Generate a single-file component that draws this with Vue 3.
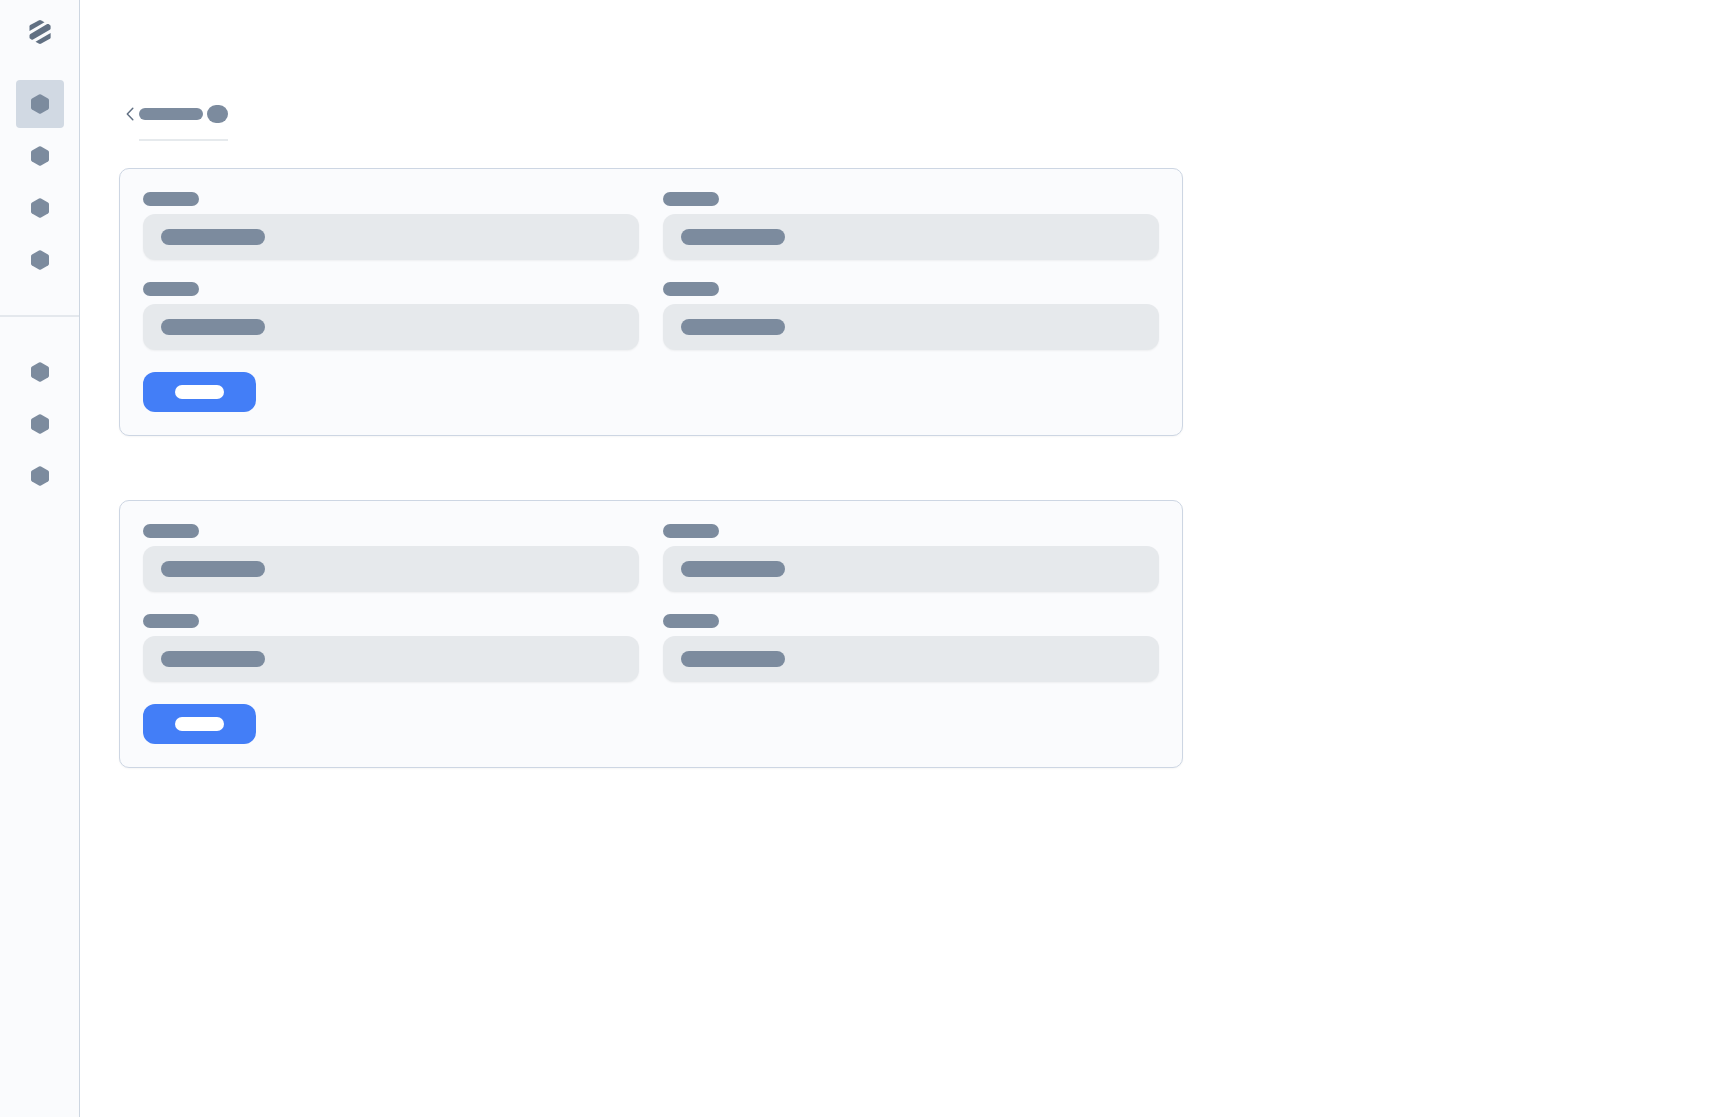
<script setup>
const primaryNav = ['Home', 'Projects', 'Team', 'Reports']
const secondaryNav = ['Billing', 'Support', 'Settings']
const cards = [
  { id: 'profile', fields: ['First', 'Second', 'Third', 'Fourth'] },
  { id: 'address', fields: ['First', 'Second', 'Third', 'Fourth'] },
]
</script>

<template>
  <div class="layout">
    <aside class="sidebar">
      <a class="logo" href="#" aria-label="Dashboard">
        <svg width="22" height="24" viewBox="0 0 22 24" fill="#617083">
          <path d="M0.500 6.400 Q0.500 5.500 1.200 5.100 L9.700 0.400 Q11 -0.300 12.300 0.400 L15.500 2.300 L0.500 11.100 Z" />
          <path d="M0.500 15.400 Q0.500 14.400 1.400 13.900 L18.200 4.100 Q18.900 3.700 19.600 4.100 L20.900 4.900 Q21.600 5.400 21.600 6.200 V8.400 Q21.600 9.300 20.800 9.800 L4 19.500 Q3.200 20 2.400 19.500 L1.300 18.800 Q0.500 18.300 0.500 17.400 Z" />
          <path d="M21.600 12.900 V17.400 Q21.600 18.300 20.900 18.700 L12.300 23.600 Q11 24.300 9.700 23.600 L6.500 21.700 Z" />
        </svg>
      </a>
      <nav class="nav" aria-label="Primary">
        <a
          v-for="(item, i) in primaryNav"
          :key="item"
          class="nav-item"
          :class="{ active: i === 0 }"
          href="#"
          :aria-label="item"
        >
          <svg width="18" height="20" viewBox="0 0 18 20" fill="#7c8b9e">
            <path d="M8 0.400 Q9 -0.100 10 0.400 L17 4.500 Q18 5.100 18 6.200 V13.800 Q18 14.900 17 15.500 L10 19.600 Q9 20.100 8 19.600 L1 15.500 Q0 14.900 0 13.800 V6.200 Q0 5.100 1 4.500 Z" />
          </svg>
        </a>
      </nav>
      <hr class="divider" />
      <nav class="nav" aria-label="Secondary">
        <a v-for="item in secondaryNav" :key="item" class="nav-item" href="#" :aria-label="item">
          <svg width="18" height="20" viewBox="0 0 18 20" fill="#7c8b9e">
            <path d="M8 0.400 Q9 -0.100 10 0.400 L17 4.500 Q18 5.100 18 6.200 V13.800 Q18 14.900 17 15.500 L10 19.600 Q9 20.100 8 19.600 L1 15.500 Q0 14.900 0 13.800 V6.200 Q0 5.100 1 4.500 Z" />
          </svg>
        </a>
      </nav>
    </aside>

    <main class="content">
      <header class="heading">
        <button class="back" type="button" aria-label="Back">
          <svg width="8" height="14" viewBox="0 0 8 14" fill="none" stroke="#617083" stroke-width="1.500" stroke-linecap="round" stroke-linejoin="round">
            <path d="M6.800 1.300 L1.300 7 L6.800 12.700" />
          </svg>
        </button>
        <a class="tab" href="#" aria-label="Current section">
          <span class="bar title"></span>
          <span class="bar count"></span>
        </a>
      </header>

      <form v-for="card in cards" :key="card.id" class="card" @submit.prevent>
        <div class="fields">
          <div v-for="(name, i) in card.fields" :key="name" class="field">
            <label class="bar label" :for="`${card.id}-${i}`" :aria-label="name"></label>
            <div class="control">
              <input :id="`${card.id}-${i}`" class="input" type="text" :aria-label="name" />
              <span class="bar value"></span>
            </div>
          </div>
        </div>
        <button class="submit" type="submit" aria-label="Save">
          <span class="bar caption"></span>
        </button>
      </form>
    </main>
  </div>
</template>

<style>
body {
  margin: 0;
  background: #fff;
  font-family: Inter, sans-serif;
}
</style>

<style scoped>
* {
  box-sizing: border-box;
}

.layout {
  display: flex;
  min-height: 100vh;
}

.sidebar {
  flex: 0 0 80px;
  border-right: 1px solid #cdd6e1;
  background: #fafbfd;
}

.logo {
  display: flex;
  justify-content: center;
  padding: 20px 0 36px;
  margin-right: -1px;
}

.nav {
  display: flex;
  flex-direction: column;
  gap: 4px;
  padding-left: 16px;
}

.nav-item {
  display: flex;
  align-items: center;
  justify-content: center;
  width: 48px;
  height: 48px;
  border-radius: 4px;
}

.nav-item.active {
  background: #d1d9e3;
}

.divider {
  height: 2px;
  margin: 31px 0;
  border: 0;
  background: #e4e8ed;
}

.content {
  flex: 1;
  min-width: 0;
  padding: 105px 39px 64px;
}

.bar {
  display: block;
  border-radius: 12px;
  background: #7c8b9e;
}

.heading {
  display: flex;
  align-items: flex-start;
  margin-bottom: 27px;
}

.back {
  display: flex;
  align-items: center;
  justify-content: flex-end;
  width: 20px;
  height: 18px;
  padding: 0 5px 0 0;
  border: 0;
  background: none;
}

.tab {
  display: flex;
  align-items: center;
  gap: 4px;
  padding-bottom: 16px;
  border-bottom: 2px solid #e6eaed;
}

.title {
  width: 64px;
  height: 12px;
}

.count {
  width: 21px;
  height: 18px;
}

.card {
  max-width: 1064px;
  padding: 23px;
  border: 1px solid #cdd6e3;
  border-radius: 10px;
  background: #fafbfd;
  box-shadow: 0 1px 2px rgba(0, 0, 0, 0.04);
}

.card + .card {
  margin-top: 64px;
}

.fields {
  display: grid;
  grid-template-columns: 1fr 1fr;
  gap: 22px 24px;
}

.field {
  display: flex;
  flex-direction: column;
  gap: 8px;
}

.label {
  width: 56px;
  height: 14px;
}

.control {
  display: grid;
  align-items: center;
}

.input,
.value {
  grid-area: 1 / 1;
}

.input {
  width: 100%;
  height: 46px;
  padding: 0 18px;
  border: 0;
  border-radius: 12px;
  background: #e6e9ec;
  box-shadow: 0 1px 2px rgba(0, 0, 0, 0.05);
  font: inherit;
}

.value {
  width: 104px;
  height: 16px;
  margin-left: 18px;
  pointer-events: none;
}

.submit {
  display: flex;
  align-items: center;
  justify-content: center;
  width: 113px;
  height: 40px;
  margin-top: 22px;
  padding: 0;
  border: 0;
  border-radius: 12px;
  background: #437ef7;
}

.caption {
  width: 49px;
  height: 14px;
  background: #fff;
}
</style>
